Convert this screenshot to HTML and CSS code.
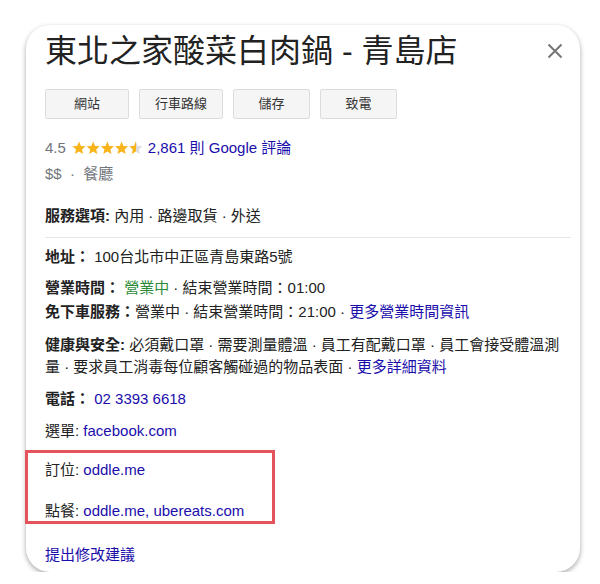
FILE: index.html
```html
<!DOCTYPE html>
<html lang="zh-Hant">
<head>
<meta charset="utf-8">
<link rel="stylesheet" href="styles.css">
</head>
<body>
<div class="card">
  <div class="header">
    <h1 class="title">東北之家酸菜白肉鍋 - 青島店</h1>
    <button class="close" aria-label="關閉">
      <svg width="16" height="16" viewBox="0 0 16 16"><path d="M1.5 1.5 L14.5 14.5 M14.5 1.5 L1.5 14.5" stroke="#767676" stroke-width="2" fill="none"/></svg>
    </button>
  </div>
  <div class="actions">
    <span class="btn btn-wide">網站</span>
    <span class="btn btn-wide">行車路線</span>
    <span class="btn">儲存</span>
    <span class="btn">致電</span>
  </div>
  <div class="rating">
    <span class="score">4.5</span>
    <svg class="stars" width="71" height="14" viewBox="0 0 71 14">
      <defs>
        <path id="st" d="M7 0.6 L8.9 4.9 L13.5 5.3 L10 8.4 L11.1 13 L7 10.6 L2.9 13 L4 8.4 L0.5 5.3 L5.1 4.9 Z"/>
        <linearGradient id="halfgrad" x1="0" x2="1" y1="0" y2="0">
          <stop offset="0.5" stop-color="#f9b31b"/>
          <stop offset="0.5" stop-color="#dadce0"/>
        </linearGradient>
      </defs>
      <use href="#st" x="0" fill="#f9b31b"/>
      <use href="#st" x="14.2" fill="#f9b31b"/>
      <use href="#st" x="28.4" fill="#f9b31b"/>
      <use href="#st" x="42.6" fill="#f9b31b"/>
      <use href="#st" x="56.8" fill="url(#halfgrad)"/>
    </svg>
    <a class="link">2,861 則 Google 評論</a>
  </div>
  <div class="meta">$$ &nbsp;·&nbsp; 餐廳</div>
  <div class="services"><b>服務選項:</b> 內用 · 路邊取貨 · 外送</div>
  <div class="divider"></div>
  <div class="row address"><b>地址：</b> 100台北市中正區青島東路5號</div>
  <div class="row hours"><b>營業時間：</b> <span class="open">營業中</span> · 結束營業時間：01:00</div>
  <div class="row drive"><b>免下車服務：</b>營業中 · 結束營業時間：21:00 · <a class="link">更多營業時間資訊</a></div>
  <div class="row health"><b>健康與安全:</b> 必須戴口罩 · 需要測量體溫 · 員工有配戴口罩 · 員工會接受體溫測量 · 要求員工消毒每位顧客觸碰過的物品表面 · <a class="link">更多詳細資料</a></div>
  <div class="row phone"><b>電話：</b> <a class="link">02 3393 6618</a></div>
  <div class="row menu">選單: <a class="link">facebook.com</a></div>
  <div class="highlight">
    <div class="hl-row">訂位: <a class="link">oddle.me</a></div>
    <div class="hl-row order">點餐: <a class="link">oddle.me, ubereats.com</a></div>
  </div>
  <div class="suggest"><a class="link">提出修改建議</a></div>
</div>
</body>
</html>
```

FILE: styles.css
```css
html, body {
  margin: 0;
  padding: 0;
  background: #ffffff;
}

body {
  font-family: "Liberation Sans", Arial, "Noto Sans CJK TC", sans-serif;
}

.card {
  margin: 25px 0 0 26px;
  width: 554px;
  height: 547px;
  box-sizing: border-box;
  padding: 0 9px 0 19px;
  border-radius: 24px;
  background: #ffffff;
  box-shadow: 0 2px 5px rgba(0, 0, 0, 0.35);
  color: #222222;
  font-size: 15px;
  line-height: 22px;
}

.header {
  display: flex;
  align-items: flex-start;
  justify-content: space-between;
  padding-top: 6px;
}

.title {
  margin: 0;
  font-size: 32px;
  line-height: 40px;
  font-weight: normal;
  color: #222222;
}

.close {
  margin: 12px 8px 0 0;
  padding: 0;
  border: none;
  background: none;
  width: 16px;
  height: 16px;
  display: flex;
}

.actions {
  display: flex;
  gap: 10px;
  margin-top: 18px;
}

.btn {
  box-sizing: border-box;
  width: 77px;
  height: 30px;
  display: flex;
  align-items: center;
  justify-content: center;
  background: #f5f5f5;
  border: 1px solid #dcdcdc;
  border-radius: 2px;
  font-size: 13px;
  color: #333333;
}

.btn-wide {
  width: 84px;
}

.link {
  color: #1a0dab;
  text-decoration: none;
}

.rating {
  display: flex;
  align-items: center;
  margin-top: 18px;
  height: 22px;
}

.score {
  color: #70757a;
}

.stars {
  display: block;
  margin: 0 5px 0 6px;
}

.meta {
  margin-top: 4px;
  color: #70757a;
}

.services {
  margin-top: 20px;
}

.divider {
  margin-top: 10px;
  height: 1px;
  background: #e6e6e6;
}

.row {
  margin-top: 10px;
}

.address {
  margin-top: 8px;
}

.hours {
  margin-top: 9px;
}

.drive {
  margin-top: 2px;
}

.health {
  margin-top: 11px;
}

.open {
  color: #2e8b3a;
}

.highlight {
  box-sizing: border-box;
  margin: 8px 0 0 -20px;
  width: 250px;
  border: 3px solid #e5535d;
  padding: 6px 0 0 17px;
  height: 74px;
}

.hl-row.order {
  margin-top: 19px;
}

.suggest {
  margin-top: 20px;
}
```
